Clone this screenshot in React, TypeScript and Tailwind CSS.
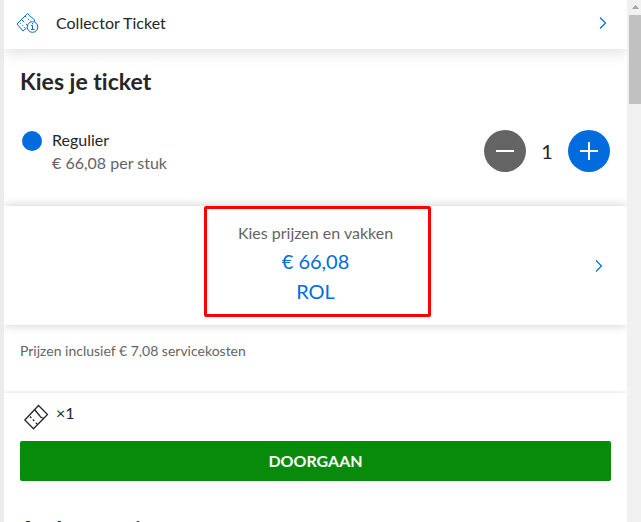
import { useState } from "react";

const Chevron = () => (
  <svg width="8" height="12" viewBox="0 0 8 12" fill="none" stroke="#026cdf" strokeWidth="1.2">
    <path d="M1 0.5L6.5 6L1 11.5" />
  </svg>
);

const TicketInfoIcon = () => (
  <svg width="24" height="24" viewBox="0 0 24 24" fill="none" stroke="#026cdf">
    <path d="M10.5 17L7 20L1 13L11.5 2.5L13.5 4.5Q14 6 15.5 6L18.5 9V10.5" />
    <path d="M5.5 8.5L8 11M10 13L11.5 14.5" />
    <path d="M9 5L15 11" strokeDasharray="2 2" />
    <path d="M4 12L9 17" strokeDasharray="1 2" />
    <circle cx="16.5" cy="16" r="5.3" />
    <path d="M15 14.5H16.5V18.5M15 18.5H18.5M16.5 12V13.3" />
  </svg>
);

const TicketIcon = () => (
  <svg width="26" height="26" viewBox="0 0 26 26" fill="none" stroke="#262626" strokeWidth="1.3">
    <path d="M0.8 16L14.5 1.5L23.5 10.5L9.5 24.8Z" />
    <path d="M10.5 5.5L15.5 11.5L16.5 13L19.5 14.5" />
    <path d="M6 12.5L13.5 20.5" strokeDasharray="2 2.2" />
  </svg>
);

const App = () => {
  const [count, setCount] = useState(1);

  return (
    <div className="flex h-screen overflow-hidden bg-[#ececec] pl-1 font-[Lato,sans-serif] text-[#262626]">
      <main className="min-w-0 flex-1 overflow-hidden bg-white [font-variant-ligatures:none]">
        <a
          href="#ticket"
          className="relative flex h-[49px] items-center bg-white pr-5 pb-1 pl-3 shadow-[0_2px_16px_rgba(0,0,0,0.15)]"
        >
          <TicketInfoIcon />
          <span className="ml-4 flex-1">Collector Ticket</span>
          <Chevron />
        </a>

        <section className="px-4 pt-4 pb-8">
          <h2 className="text-[23px] leading-8 font-bold">Kies je ticket</h2>
          <div className="mt-[31px] flex items-center pr-px">
            <span className="mt-[3px] ml-0.5 h-5 w-5 self-start rounded-full bg-[#026cdf]" />
            <div className="ml-2.5 flex-1 leading-[23px]">
              <p>Regulier</p>
              <p className="text-[#646464]">€ 66,08 per stuk</p>
            </div>
            <div className="flex items-center">
              <button
                type="button"
                aria-label="Minder tickets"
                className="grid h-[42px] w-[42px] place-items-center rounded-full bg-[#646464]"
                onClick={() => setCount(Math.max(1, count - 1))}
              >
                <svg width="18" height="18" stroke="white" strokeWidth="2">
                  <path d="M0 9H18" />
                </svg>
              </button>
              <output className="w-[42px] text-center text-xl">{count}</output>
              <button
                type="button"
                aria-label="Meer tickets"
                className="grid h-[42px] w-[42px] place-items-center rounded-full bg-[#026cdf]"
                onClick={() => setCount(count + 1)}
              >
                <svg width="18" height="18" stroke="white" strokeWidth="2">
                  <path d="M0 9H18M9 0V18" />
                </svg>
              </button>
            </div>
          </div>
        </section>

        <a
          href="#prijzen"
          className="relative flex h-[119px] items-center bg-white pr-6 pl-9 shadow-[0_0_10px_rgba(0,0,0,0.2)]"
        >
          <span className="flex flex-1 justify-center self-start">
            <span className="flex h-[111px] w-[227px] flex-col items-center rounded-xs border-3 border-[#ff0000] pt-2.5 pr-1 text-[#646464]">
              <span className="leading-7">Kies prijzen en vakken</span>
              <span className="text-xl leading-7 text-[#026cdf]">€ 66,08</span>
              <span className="text-xl leading-8 text-[#026cdf]">ROL</span>
            </span>
          </span>
          <Chevron />
        </a>

        <p className="px-4 pt-4 pb-8 text-sm text-[#646464]">
          Prijzen inclusief € 7,08 servicekosten
        </p>

        <section className="bg-white px-4 pt-2 shadow-[0_0_4px_rgba(0,0,0,0.15)]">
          <div className="flex h-10 items-start pl-1">
            <span className="mt-[3px]">
              <TicketIcon />
            </span>
            <span className="ml-1.5 leading-6">×{count}</span>
          </div>
          <button
            type="button"
            className="h-10 w-full rounded-xs bg-[#088a0b] font-bold text-white"
          >
            DOORGAAN
          </button>
          <h2 className="mt-8 text-[23px] leading-8 font-bold">Andere opties</h2>
        </section>
      </main>

      <div className="flex w-[14px] flex-col items-end bg-[#f1f1f1]">
        <svg width="12" height="15" viewBox="0 0 12 15" fill="#a3a3a3">
          <path d="M3 9L6.5 5L10 9Z" />
        </svg>
        <div className="h-[89px] w-3 bg-[#c1c1c1]" />
      </div>
    </div>
  );
};

export default App;
